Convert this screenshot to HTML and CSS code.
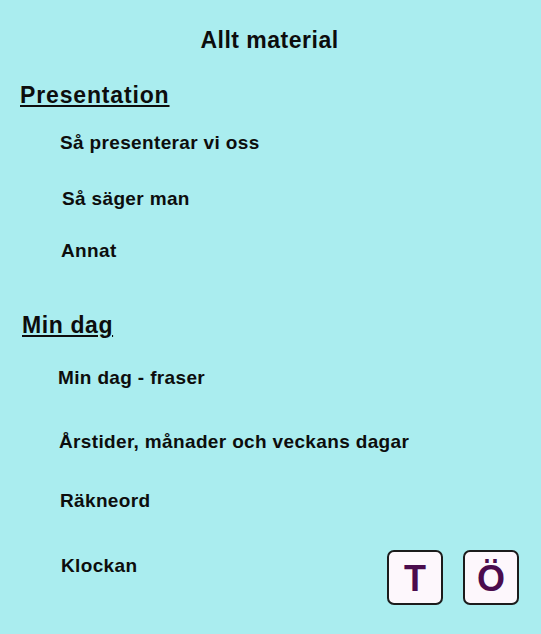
FILE: index.html
```html
<!DOCTYPE html>
<html lang="sv">
<head>
<meta charset="utf-8">
<title>Allt material</title>
<link rel="stylesheet" href="styles.css">
</head>
<body>
<main class="page">
  <h1 class="title">Allt material</h1>

  <section class="group group--intro">
    <h2 class="heading">Presentation</h2>
    <ul class="items">
      <li class="item">Så presenterar vi oss</li>
      <li class="item item--r2">Så säger man</li>
      <li class="item item--r1">Annat</li>
    </ul>
  </section>

  <section class="group group--day">
    <h2 class="heading heading--day">Min dag</h2>
    <ul class="items">
      <li class="item item--l2">Min dag - fraser</li>
      <li class="item item--l1">Årstider, månader och veckans dagar</li>
      <li class="item item--count">Räkneord</li>
      <li class="item item--last">
        <span class="item-text">Klockan</span>
        <span class="keys">
          <span class="key">T</span>
          <span class="key">Ö</span>
        </span>
      </li>
    </ul>
  </section>
</main>
</body>
</html>
```

FILE: styles.css
```css
html, body {
  margin: 0;
  padding: 0;
}

body {
  background: #aaedef;
  color: #0d0d0d;
  font-family: "Liberation Sans", Arial, sans-serif;
  width: 541px;
  height: 634px;
  overflow: hidden;
}

.page {
  padding: 27px 22px 0 20px;
}

.title {
  margin: 0;
  font-size: 23px;
  line-height: 26px;
  font-weight: bold;
  letter-spacing: 0.5px;
  text-align: center;
}

.group--intro {
  margin-top: 29px;
}

.group--day {
  margin-top: 50px;
}

.heading {
  margin: 0;
  font-size: 23px;
  line-height: 26px;
  font-weight: bold;
  letter-spacing: 0.85px;
  text-decoration: underline;
  text-decoration-thickness: 2px;
  text-underline-offset: 2px;
}

.heading--day {
  padding-left: 2px;
  letter-spacing: 0.6px;
}

.items {
  list-style: none;
  margin: 24px 0 0 0;
  padding: 0 0 0 40px;
  display: flex;
  flex-direction: column;
  gap: 31px;
}

.group--day .items {
  margin-top: 29px;
  gap: 40px;
}

.item {
  font-size: 19px;
  line-height: 22px;
  font-weight: bold;
  letter-spacing: 0.35px;
}

.item--r2 { padding-left: 2px; margin-top: 3px; }
.item--r1 { padding-left: 1px; margin-top: -1px; }
.item--l2 { margin-left: -2px; }
.item--l1 { margin-left: -1px; margin-top: 2px; }
.item--count { margin-top: -3px; }

.item--last {
  display: flex;
  align-items: flex-start;
  margin-top: -2px;
  padding-left: 1px;
}

.item-text {
  padding-top: 5px;
}

.keys {
  margin-left: auto;
  display: flex;
  gap: 20px;
}

.key {
  box-sizing: border-box;
  width: 56px;
  height: 55px;
  border: 2px solid #1c1c1c;
  border-radius: 7px;
  background: #fdf7fc;
  color: #4b0c4d;
  font-size: 36px;
  font-weight: bold;
  line-height: 1;
  letter-spacing: 0;
  display: flex;
  align-items: center;
  justify-content: center;
  padding-top: 3px;
}
```
